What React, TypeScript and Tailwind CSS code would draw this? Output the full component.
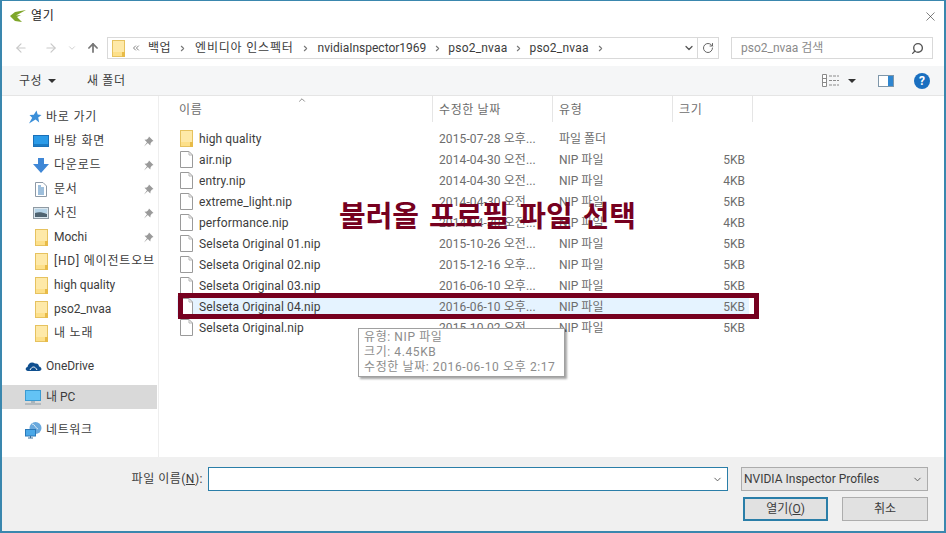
import React from "react";
import { ArrowLeft, ArrowRight, ArrowUp, ChevronDown, ChevronRight, ChevronUp, ChevronsLeft, RotateCw, Search, X } from "lucide-react";

const FolderIcon = ({ className = "" }: { className?: string }) => (
  <svg viewBox="0 0 13 17" className={className}>
    <rect x="0.5" y="0.5" width="12" height="16" fill="#fde08a" stroke="#e6c25f" />
    <path d="M1 1h11v11H1z" fill="#fee9a8" />
    <rect x="10" y="12" width="3" height="5" fill="#e8bb48" />
  </svg>
);

const FileIcon = () => (
  <svg viewBox="0 0 13 17" className="w-[13px] h-[17px] shrink-0">
    <path d="M0.5 0.5H9L12.5 4V16.5H0.5Z" fill="#fff" stroke="#9a9a9a" />
    <path d="M9 0.5V4H12.5" fill="none" stroke="#b5b5b5" />
  </svg>
);

const StarIcon = () => (
  <svg viewBox="0 0 14 14" className="w-[14px] h-[14px]">
    <path d="M8.5 0.5L9.7 4.6L13.5 5L10.2 7.6L11.2 12.5L7.5 9.6L1 13.5L4.2 7.8L1.5 5L5.8 4.8Z" fill="#3b8fd9" />
  </svg>
);

const PinIcon = () => (
  <svg viewBox="0 0 11 11" className="w-[11px] h-[11px]">
    <path d="M6 0.5L10.5 5L9 5.6L7.6 7.2L7.3 9.5L4.8 7L1 10.5L4 6.2L1.5 3.7L3.8 3.4L5.4 2Z" fill="#9a9a9a" />
  </svg>
);

const DesktopIcon = () => (
  <svg viewBox="0 0 16 12" className="w-4 h-3">
    <rect x="0.5" y="0.5" width="15" height="11" fill="#2b9be8" stroke="#1a70b8" />
    <path d="M1 10h14" stroke="#0f5c9e" />
  </svg>
);

const DownloadIcon = () => (
  <svg viewBox="0 0 16 15" className="w-4 h-[15px]">
    <path d="M5 0H11V6H16L8 15L0 6H5Z" fill="#3f87d6" />
  </svg>
);

const DocIcon = () => (
  <svg viewBox="0 0 12 15" className="w-3 h-[15px] ml-[2px]">
    <path d="M0.5 0.5H8L11.5 4V14.5H0.5Z" fill="#fff" stroke="#8d99a6" />
    <path d="M3 4h3M3 6h6M3 8h6M3 10h6M3 12h6" stroke="#3d7fb8" />
  </svg>
);

const PictureIcon = () => (
  <svg viewBox="0 0 16 12" className="w-4 h-3">
    <rect x="0.5" y="0.5" width="15" height="11" fill="#dbe7ef" stroke="#8f9aa3" />
    <path d="M2 2h12v4H2z" fill="#b6d4e8" />
    <path d="M2 6c3-1 7-1 12 1v3H2z" fill="#4f6472" />
  </svg>
);

const CloudIcon = () => (
  <svg viewBox="0 0 17 10" className="w-[17px] h-[10px]">
    <path d="M3 10C0 10 0 6.500 2.500 6C3 2 7 0 10 2.500C13 2 14 4 14 5.500C17 6 17.500 10 14 10Z" fill="#0f4f8f" />
    <path d="M5 9C7 5 10 5 12 9" fill="none" stroke="#fff" />
  </svg>
);

const PcIcon = () => (
  <svg viewBox="0 0 16 15" className="w-4 h-[15px]">
    <rect x="0.5" y="0.5" width="15" height="10" fill="#63c3f5" stroke="#3b9bd2" />
    <path d="M6 11h4v2H6z" fill="#a8b4bc" />
    <path d="M0 14h16" stroke="#8d9aa3" />
  </svg>
);

const NetworkIcon = () => (
  <svg viewBox="0 0 17 17" className="w-[17px] h-[17px]">
    <circle cx="10.500" cy="6" r="6" fill="#6aa9dd" />
    <path d="M7 2c3 0 3 4 6 5" fill="none" stroke="#d6e8f5" />
    <rect x="0.5" y="7.500" width="10" height="6.500" fill="#4aa8e8" stroke="#2a78b8" />
    <path d="M3 16h5M5.500 14v2" stroke="#3a6f9a" />
  </svg>
);

const NavRow = ({ icon, label, pin, ko }: { icon: React.ReactNode; label: string; pin?: boolean; ko?: boolean }) => (
  <div className="h-6 flex items-center">
    <div className="w-[52px] pl-[31px] flex items-center shrink-0">{icon}</div>
    <span className={`flex-1 whitespace-nowrap overflow-hidden ${ko ? "tracking-[0.8px]" : ""}`}>{label}</span>
    {pin && (
      <div className="w-[14px] shrink-0">
        <PinIcon />
      </div>
    )}
  </div>
);

const folderSmall = <FolderIcon className="w-[13px] h-[17px] ml-[2px]" />;

const files = [
  { name: "high quality", date: "2015-07-28 오후...", type: "파일 폴더", size: "", folder: true },
  { name: "air.nip", date: "2014-04-30 오전...", type: "NIP 파일", size: "5KB" },
  { name: "entry.nip", date: "2014-04-30 오전...", type: "NIP 파일", size: "4KB" },
  { name: "extreme_light.nip", date: "2014-04-30 오전...", type: "NIP 파일", size: "5KB" },
  { name: "performance.nip", date: "2014-04-30 오전...", type: "NIP 파일", size: "4KB" },
  { name: "Selseta Original 01.nip", date: "2015-10-26 오전...", type: "NIP 파일", size: "5KB" },
  { name: "Selseta Original 02.nip", date: "2015-12-16 오후...", type: "NIP 파일", size: "5KB" },
  { name: "Selseta Original 03.nip", date: "2016-06-10 오후...", type: "NIP 파일", size: "5KB" },
  { name: "Selseta Original 04.nip", date: "2016-06-10 오후...", type: "NIP 파일", size: "5KB", selected: true },
  { name: "Selseta Original.nip", date: "2015-10-02 오전...", type: "NIP 파일", size: "5KB" },
];

const crumbs = ["백업", "엔비디아 인스펙터", "nvidiaInspector1969", "pso2_nvaa", "pso2_nvaa"];

const App = () => {
  return (
    <div className="relative w-[946px] h-[533px] overflow-hidden flex flex-col bg-white text-[12px] text-[#3c3c3c] border-x-2 border-b-2 border-t border-[#3a87ae] font-['Roboto','Noto_Sans_CJK_KR',sans-serif]">
      {/* title bar */}
      <div className="h-[30px] flex items-center pl-2 pr-[6px] shrink-0">
        <svg viewBox="0 0 16 12" className="w-4 h-3 mr-[5px]">
          <path d="M16 0L5 2L0 6L5 11L12 12L7 7L11 5L6 5.500Z" fill="#7fa62a" />
        </svg>
        <span className="text-[#222] tracking-[0.8px]">열기</span>
        <X className="ml-auto w-[15px] h-[15px] text-[#333]" strokeWidth={1} />
      </div>

      {/* address row */}
      <div className="h-[35px] flex items-start pt-[6px] shrink-0">
        <div className="w-[105px] h-[22px] flex items-center pl-3 shrink-0">
          <ArrowLeft className="w-[14px] h-[14px] text-[#c9c9c9]" />
          <ArrowRight className="w-[14px] h-[14px] text-[#c9c9c9] ml-4" />
          <ChevronDown className="w-[10px] h-[10px] text-[#c9c9c9] ml-[9px]" />
          <ArrowUp className="w-[14px] h-[14px] text-[#777] ml-[9px]" strokeWidth={3} />
        </div>
        <div className="w-[612px] h-[22px] border border-[#d9d9d9] flex items-center pl-[4px] shrink-0">
          <FolderIcon className="w-[13px] h-[17px] shrink-0" />
          <ChevronsLeft className="w-[10px] h-[10px] ml-[6px] text-[#666]" />
          {crumbs.map((c, i) => (
            <React.Fragment key={i}>
              <span
                className={
                  i === 0
                    ? "ml-[7px] tracking-[0.5px]"
                    : i === 1
                      ? "ml-[8px] tracking-[0.8px]"
                      : i === 2
                        ? "ml-[8px]"
                        : "ml-[6px] tracking-[0.2px]"
                }
              >
                {c}
              </span>
              <ChevronRight className="w-[9px] h-[9px] text-[#777] ml-[7px]" strokeWidth={3} />
            </React.Fragment>
          ))}
          <ChevronDown className="ml-auto w-[12px] h-[12px] text-[#555]" strokeWidth={2.500} />
          <div className="w-px h-full bg-[#d9d9d9] ml-[2px]" />
          <div className="w-5 flex justify-center">
            <RotateCw className="w-[12px] h-[12px] text-[#666]" />
          </div>
        </div>
        <div className="ml-3 w-[202px] h-[22px] border border-[#d9d9d9] flex items-center pl-[9px] pr-[8px] text-[#8a8a8a] shrink-0">
          <span>pso2_nvaa 검색</span>
          <Search className="ml-auto w-[13px] h-[13px] text-[#555] -scale-x-100" strokeWidth={2.500} />
        </div>
      </div>

      {/* toolbar */}
      <div className="h-[30px] bg-[#f5f6f7] border-b border-[#e5e5e5] flex items-center pl-[17px] shrink-0">
        <span className="tracking-[0.5px]">구성</span>
        <svg viewBox="0 0 8 4" className="w-2 h-1 ml-[6px]">
          <path d="M0 0H8L4 4Z" fill="#333" />
        </svg>
        <span className="ml-[31px] tracking-[0.6px]">새 폴더</span>
        <svg viewBox="0 0 17 13" className="w-[17px] h-[13px] ml-auto">
          <path d="M0.5 0.5h4v12h-4zM0.5 4.500h4M0.5 8.500h4" fill="#fff" stroke="#8a8a8a" />
          <path d="M7 2h10M7 6.500h10M7 11h10" stroke="#8a8a8a" strokeDasharray="3 1" />
        </svg>
        <svg viewBox="0 0 8 4" className="w-2 h-1 ml-[9px]">
          <path d="M0 0H8L4 4Z" fill="#333" />
        </svg>
        <svg viewBox="0 0 16 12" className="w-4 h-3 ml-[22px]">
          <rect x="0.5" y="0.5" width="15" height="11" fill="#fff" stroke="#7f97aa" />
          <rect x="10" y="1" width="5" height="10" fill="#2f86d0" />
        </svg>
        <div className="ml-[20px] mr-[14px] w-4 h-4 rounded-full bg-[#1a6fc0] text-white font-bold flex items-center justify-center text-[12px]">
          ?
        </div>
      </div>

      {/* body */}
      <div className="flex-1 flex min-h-0">
        <aside className="w-[157px] shrink-0 border-r border-[#eeeeee] pt-[9px] pr-[1px]">
          <div className="h-6 flex items-center">
            <div className="w-[44px] pl-[26px] shrink-0">
              <StarIcon />
            </div>
            <span className="tracking-[0.8px]">바로 가기</span>
          </div>
          <NavRow icon={<DesktopIcon />} label="바탕 화면" pin ko />
          <NavRow icon={<DownloadIcon />} label="다운로드" pin ko />
          <NavRow icon={<DocIcon />} label="문서" pin ko />
          <NavRow icon={<PictureIcon />} label="사진" pin ko />
          <NavRow icon={folderSmall} label="Mochi" pin />
          <NavRow icon={folderSmall} label="[HD] 에이전트오브" ko />
          <NavRow icon={folderSmall} label="high quality" />
          <NavRow icon={folderSmall} label="pso2_nvaa" />
          <NavRow icon={folderSmall} label="내 노래" ko />
          <div className="h-6 mt-[9px] flex items-center">
            <div className="w-[44px] pl-[23px] shrink-0">
              <CloudIcon />
            </div>
            <span>OneDrive</span>
          </div>
          <div className="h-6 mt-[7px] bg-[#d9d9d9] flex items-center">
            <div className="w-[44px] pl-[23px] shrink-0">
              <PcIcon />
            </div>
            <span>내 PC</span>
          </div>
          <div className="h-6 mt-[9px] flex items-center">
            <div className="w-[44px] pl-[23px] shrink-0">
              <NetworkIcon />
            </div>
            <span className="tracking-[0.6px]">네트워크</span>
          </div>
        </aside>

        <main className="flex-1 min-w-0">
          <div className="relative h-[26px] flex text-[#6d6d6d]">
            <ChevronUp className="absolute left-[138px] -top-[1px] w-[10px] h-[10px] text-[#777]" />
            <div className="w-[274px] pl-[20px] pt-[5px] border-r border-[#e5e5e5] tracking-[0.6px]">이름</div>
            <div className="w-[120px] pl-[6px] pt-[5px] border-r border-[#e5e5e5] tracking-[0.6px]">수정한 날짜</div>
            <div className="w-[120px] pl-[6px] pt-[5px] border-r border-[#e5e5e5] tracking-[0.6px]">유형</div>
            <div className="w-[80px] pl-[6px] pt-[5px] border-r border-[#e5e5e5] tracking-[0.6px]">크기</div>
          </div>
          <div className="pt-[6px]">
            {files.map((f) => (
              <div
                key={f.name}
                className={`h-[21px] w-[572px] ml-[18px] flex items-center ${f.selected ? "bg-[#e5f3ff]" : ""}`}
              >
                <div className="w-[22px] pl-[3px] shrink-0 flex items-center">
                  {f.folder ? <FolderIcon className="w-[13px] h-[17px]" /> : <FileIcon />}
                </div>
                <div className="w-[240px] shrink-0 whitespace-nowrap tracking-[0.1px]">{f.name}</div>
                <div className="w-[120px] shrink-0 whitespace-nowrap text-[#6d6d6d] tracking-[0.1px]">{f.date}</div>
                <div className="w-[120px] shrink-0 whitespace-nowrap text-[#6d6d6d]">{f.type}</div>
                <div className="w-[66px] shrink-0 text-right text-[#6d6d6d]">{f.size}</div>
              </div>
            ))}
          </div>
        </main>
      </div>

      {/* footer */}
      <div className="h-[74px] bg-[#f0f0f0] shrink-0 flex flex-col pt-[10px] pr-[16px]">
        <div className="flex items-center justify-end">
          <span className="mr-[5px] tracking-[0.5px]">
            파일 이름(<span className="underline">N</span>):
          </span>
          <div className="w-[520px] h-6 bg-white border border-[#2a7ea8] flex items-center justify-end pr-1">
            <ChevronDown className="w-[11px] h-[11px] text-[#555]" />
          </div>
          <div className="ml-[13px] w-[187px] h-6 bg-[#e5e5e5] border border-[#acacac] flex items-center pl-[2px] pr-1">
            <span>NVIDIA Inspector Profiles</span>
            <ChevronDown className="ml-auto w-[11px] h-[11px] text-[#555]" />
          </div>
        </div>
        <div className="flex justify-end mt-[6px]">
          <button className="w-[85px] h-6 bg-[#e1e1e1] border-2 border-[#2a7ea8] text-[12px]">
            열기(<span className="underline">O</span>)
          </button>
          <button className="ml-[14px] w-[86px] h-6 bg-[#e1e1e1] border border-[#adadad] text-[12px]">취소</button>
        </div>
      </div>

      {/* annotation */}
      <div className="absolute left-[176px] top-[292px] w-[581px] h-[26px] border-[5px] border-[#76001f]" />
      <div className="absolute left-[337px] top-[195px] text-[29px] leading-[36px] [word-spacing:3.5px] font-bold text-[#76001f] whitespace-nowrap font-['Noto_Sans_CJK_KR',sans-serif]">
        불러올 프로필 파일 선택
      </div>

      {/* tooltip */}
      <div className="absolute left-[356px] top-[327px] w-[207px] h-[49px] bg-white border border-[#a0a0a0] shadow-[2px_2px_2px_rgba(0,0,0,0.35)] pl-[5px] text-[#8c8c8c] leading-[15px] pt-[1px] whitespace-nowrap tracking-[0.6px]">
        <div>유형: NIP 파일</div>
        <div>크기: 4.45KB</div>
        <div>수정한 날짜: 2016-06-10 오후 2:17</div>
      </div>
    </div>
  );
};

export default App;
